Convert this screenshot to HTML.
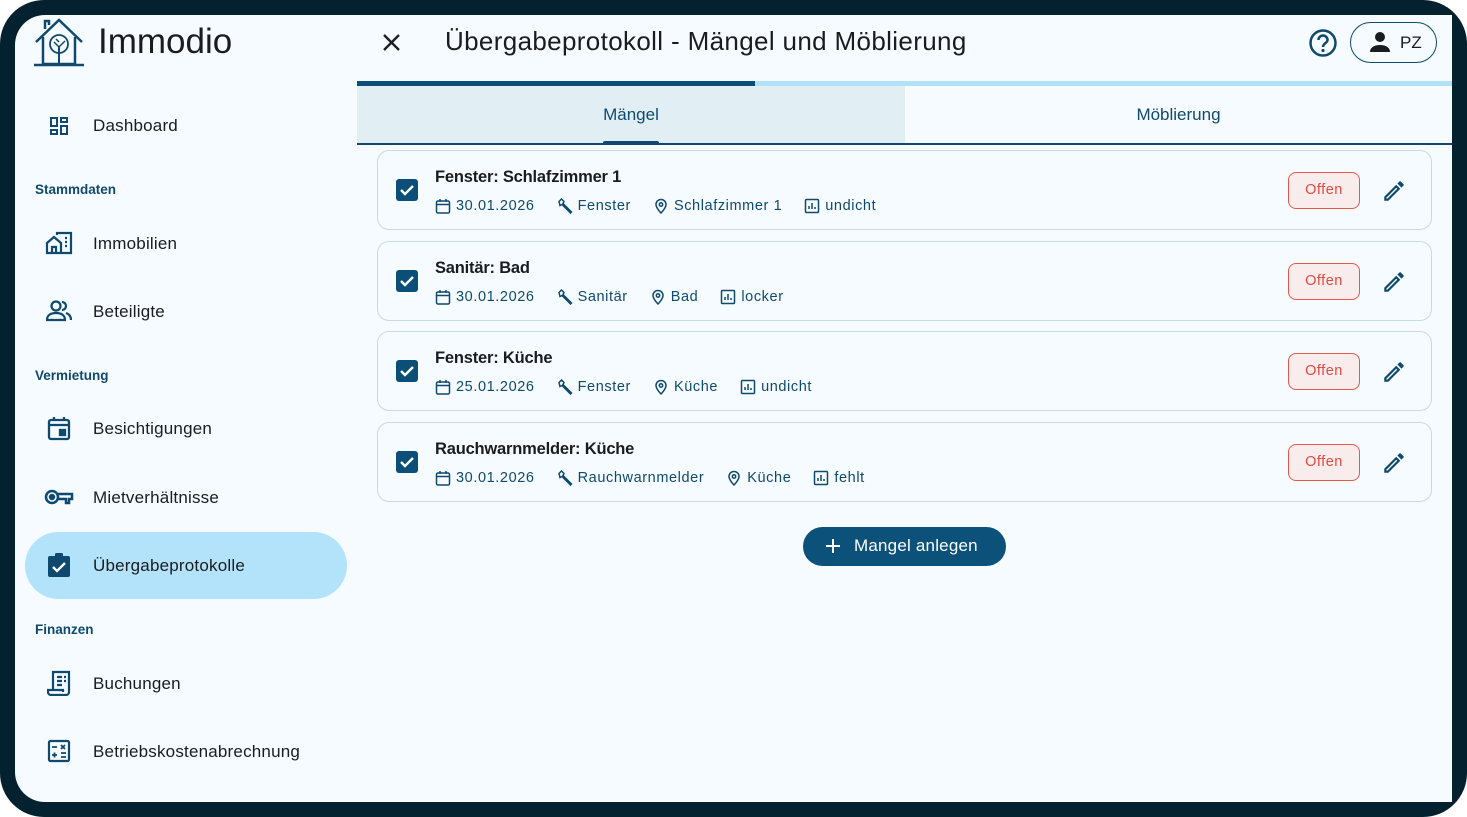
<!DOCTYPE html>
<html><head><meta charset="utf-8"><style>
*{box-sizing:border-box;margin:0;padding:0}
body{width:1467px;height:817px;background:#ffffff;font-family:"Liberation Sans",sans-serif;overflow:hidden;position:relative}
.frame{position:absolute;left:0;top:0;width:1467px;height:817px;background:#03212f;border-radius:44px}
.screen{position:absolute;left:15px;top:15px;width:1437px;height:787px;background:#f5fbfe;border-radius:30px 0 0 30px;overflow:hidden}
.abs{position:absolute}
.nav{position:absolute;left:93px;font-size:17px;color:#1a1c1e;letter-spacing:.2px}
.sec{position:absolute;left:35px;font-size:13.5px;font-weight:bold;color:#0f4a6e}
.ic{position:absolute;left:47px}
.card{position:absolute;left:377px;width:1055px;height:80px;border:1.5px solid #c8dae4;border-radius:12px;background:#f5fbfe}
.cb{position:absolute;left:18px;top:28px;width:22px;height:22px;background:#0b4f78;border-radius:3px}
.t{position:absolute;left:57px;top:17px;font-size:16.5px;font-weight:bold;color:#1a1c1e;letter-spacing:-.2px}
.m{position:absolute;left:57px;top:47px;font-size:14.5px;color:#0f4a6e;display:flex;align-items:center;letter-spacing:.6px}
.m svg{margin-right:5px}
.m span{margin-right:22px}
.chip{position:absolute;left:910px;top:21px;width:72px;height:37px;border:1.5px solid #e5584d;border-radius:8px;background:#f9ecec;color:#e04a3f;font-size:14.5px;text-align:center;line-height:34px;letter-spacing:.5px}
.pen{position:absolute;left:1003px;top:27px}
</style></head><body>
<div class="frame"></div>
<div class="screen"></div>
<!-- logo -->
<svg class="abs" style="left:33px;top:17px" width="52" height="50" viewBox="0 0 52 50" fill="none" stroke="#0f4a6e" stroke-width="2.5">
<path d="M3 25 L26 3 L49 25"/><path d="M10 20 V47 H42 V20"/><path d="M12 12 V4 H16 V8"/><path d="M1 48 H51"/>
<circle cx="26" cy="27" r="9" stroke-width="1.8"/><path d="M26 30 V47" stroke-width="2"/><path d="M21 25 l5 5 l6-6 M23 22 l3 3" stroke-width="1.5"/>
</svg>
<div class="abs" style="left:98px;top:22px;font-size:35px;color:#1a1c1e">Immodio</div>
<!-- sidebar -->
<svg class="ic" style="top:114px" width="24" height="24" viewBox="0 0 24 24" fill="#0f4a6e"><path d="M3 13h8V3H3v10zm2-8h4v6H5V5zm8 16h8V11h-8v10zm2-8h4v6h-4v-6zM13 3v6h8V3h-8zm6 4h-4V5h4v2zM3 21h8v-6H3v6zm2-4h4v2H5v-2z"/></svg>
<div class="nav" style="top:116px">Dashboard</div>
<div class="sec" style="top:182px">Stammdaten</div>
<svg class="ic" style="top:231px;left:45px" width="28" height="24" viewBox="0 0 28 24" fill="none" stroke="#0f4a6e" stroke-width="2.2"><path d="M2 12 L9 6 L16 12 V22 H2Z M7 22 V16 H11 V22 M12 4 V2 H26 V22 H16"/><path d="M20 7h2M20 11h2M20 15h2" /></svg>
<div class="nav" style="top:234px">Immobilien</div>
<svg class="ic" style="top:300px;left:46px" width="26" height="22" viewBox="0 0 26 22" fill="#0f4a6e"><circle cx="10" cy="6" r="4.5" fill="none" stroke="#0f4a6e" stroke-width="2.2"/><path d="M1 20c0-5 4-7 9-7s9 2 9 7z" fill="none" stroke="#0f4a6e" stroke-width="2.2"/><path d="M16 2a4 4 0 010 8M20 13c3 1 5 3 5 7" fill="none" stroke="#0f4a6e" stroke-width="2.2"/></svg>
<div class="nav" style="top:302px">Beteiligte</div>
<div class="sec" style="top:368px">Vermietung</div>
<svg class="ic" style="top:416px" width="24" height="25" viewBox="0 0 24 25" fill="none" stroke="#0f4a6e" stroke-width="2.3"><rect x="2" y="4" width="20" height="19" rx="2"/><path d="M2 9h20M7 1v4M17 1v4"/><rect x="13" y="14" width="5" height="5" fill="#0f4a6e"/></svg>
<div class="nav" style="top:419px">Besichtigungen</div>
<svg class="ic" style="top:488px;left:44px" width="30" height="18" viewBox="0 0 30 18" fill="none" stroke="#0f4a6e" stroke-width="2.5"><circle cx="8" cy="9" r="6"/><circle cx="8" cy="9" r="2" fill="#0f4a6e"/><path d="M14 6h14v5h-3v4h-3v-4h-8"/></svg>
<div class="nav" style="top:488px">Mietverhältnisse</div>
<div class="abs" style="left:25px;top:532px;width:322px;height:67px;border-radius:34px;background:#b3e3fb"></div>
<svg class="ic" style="top:552px" width="24" height="26" viewBox="0 0 24 26"><rect x="1" y="4" width="22" height="21" rx="2" fill="#0f4a6e"/><rect x="8" y="1" width="8" height="5" rx="1.5" fill="#0f4a6e"/><path d="M6 15l4 4 8-8" fill="none" stroke="#fff" stroke-width="2.3"/></svg>
<div class="nav" style="top:556px">Übergabeprotokolle</div>
<div class="sec" style="top:622px">Finanzen</div>
<svg class="ic" style="top:670px" width="24" height="26" viewBox="0 0 24 26" fill="none" stroke="#0f4a6e" stroke-width="2.2"><path d="M6 20V2h16v20a3 3 0 01-3 3H4a3 3 0 01-3-3v-2h15v2"/><path d="M10 7h5M10 11h5M10 15h5M17 7h2M17 11h2"/></svg>
<div class="nav" style="top:674px">Buchungen</div>
<svg class="ic" style="top:739px" width="24" height="24" viewBox="0 0 24 24" fill="none" stroke="#0f4a6e" stroke-width="2.2"><rect x="2" y="2" width="20" height="20" rx="1.5"/><path d="M5 8h5M14 6l4 4M18 6l-4 4M5 16h5M7.5 13.5v5M14 14h5M14 18h5" stroke-width="1.8"/></svg>
<div class="nav" style="top:742px">Betriebskostenabrechnung</div>
<!-- header -->
<svg class="abs" style="left:382px;top:33px" width="19" height="19" viewBox="0 0 19 19" stroke="#1a1c1e" stroke-width="2.3"><path d="M2 2l15 15M17 2L2 17"/></svg>
<div class="abs" style="left:445px;top:26px;font-size:26px;color:#1a1c1e;letter-spacing:.35px">Übergabeprotokoll - Mängel und Möblierung</div>
<svg class="abs" style="left:1308px;top:28px" width="30" height="30" viewBox="0 0 30 30"><circle cx="15" cy="15" r="12.5" fill="none" stroke="#0f4a6e" stroke-width="2.5"/><path d="M10.5 12a4.5 4.5 0 119 0c0 3-4.5 3.5-4.5 7" fill="none" stroke="#0f4a6e" stroke-width="2.5"/><circle cx="15" cy="22.5" r="1.6" fill="#0f4a6e"/></svg>
<div class="abs" style="left:1350px;top:22px;width:87px;height:41px;border:1.5px solid #0f4a6e;border-radius:21px"></div>
<svg class="abs" style="left:1369px;top:31px" width="22" height="22" viewBox="0 0 22 22" fill="#1a1c1e"><circle cx="11" cy="6" r="5"/><path d="M1 21c0-5 5-7 10-7s10 2 10 7z"/></svg>
<div class="abs" style="left:1400px;top:33px;font-size:17px;color:#1a1c1e">PZ</div>
<!-- progress & tabs -->
<div class="abs" style="left:357px;top:81px;width:1095px;height:5px;background:#b3e1f8"></div>
<div class="abs" style="left:357px;top:81px;width:398px;height:5px;background:#0b4f78"></div>
<div class="abs" style="left:357px;top:86px;width:548px;height:57px;background:#e1eef4"></div>
<div class="abs" style="left:357px;top:143px;width:1095px;height:1.5px;background:#0f4a6e"></div>
<div class="abs" style="left:603px;top:141px;width:56px;height:3px;background:#0f4a6e;border-radius:2px 2px 0 0"></div>
<div class="abs" style="left:357px;top:105px;width:548px;text-align:center;font-size:17px;color:#0f4a6e">Mängel</div>
<div class="abs" style="left:905px;top:105px;width:547px;text-align:center;font-size:17px;color:#0f4a6e">Möblierung</div>
<!-- cards -->
<svg width="0" height="0" style="position:absolute"><defs>
<symbol id="cal" viewBox="0 0 16 16"><g fill="none" stroke="#0f4a6e" stroke-width="1.5"><rect x="1.5" y="3" width="13" height="12" rx="1.5"/><path d="M1.5 6.5h13M5 1v3M11 1v3"/></g></symbol>
<symbol id="wr" viewBox="0 0 16 16"><path d="M2 3.5L4.5 1 7 3.5 6 5.5 14.5 14 13.5 15 5 6.5 3 7.5z" fill="none" stroke="#0f4a6e" stroke-width="1.5"/></symbol>
<symbol id="pin" viewBox="0 0 16 16"><g fill="none" stroke="#0f4a6e" stroke-width="1.5"><path d="M8 15s-5-5-5-8.5a5 5 0 0110 0C13 10 8 15 8 15z"/><circle cx="8" cy="6.5" r="1.7"/></g></symbol>
<symbol id="bar" viewBox="0 0 16 16"><g fill="none" stroke="#0f4a6e" stroke-width="1.5"><rect x="1.5" y="1.5" width="13" height="13" rx="1"/><path d="M5 11V8M8 11V5M11 11V9"/></g></symbol>
<symbol id="chk" viewBox="0 0 22 22"><path d="M5 11l4 4 8-8" fill="none" stroke="#fff" stroke-width="2.4"/></symbol>
<symbol id="pen" viewBox="0 0 24 24"><path d="M3 17.25V21h3.75L17.81 9.94l-3.75-3.75L3 17.25zM5.92 19H5v-.92l9.06-9.06.92.92L5.92 19zM20.71 5.63l-2.34-2.34a1 1 0 00-1.41 0l-1.83 1.83 3.75 3.75 1.830-1.83a1 1 0 000-1.41z" fill="#0f4a6e"/></symbol>
</defs></svg>

<div class="card" style="top:150px"><div class="cb"><svg width="22" height="22"><use href="#chk"/></svg></div>
<div class="t">Fenster: Schlafzimmer 1</div>
<div class="m"><svg width="16" height="16"><use href="#cal"/></svg><span>30.01.2026</span><svg width="16" height="16"><use href="#wr"/></svg><span>Fenster</span><svg width="16" height="16"><use href="#pin"/></svg><span>Schlafzimmer 1</span><svg width="16" height="16"><use href="#bar"/></svg><span>undicht</span></div>
<div class="chip">Offen</div><svg class="pen" width="26" height="26"><use href="#pen"/></svg></div>

<div class="card" style="top:241px"><div class="cb"><svg width="22" height="22"><use href="#chk"/></svg></div>
<div class="t">Sanitär: Bad</div>
<div class="m"><svg width="16" height="16"><use href="#cal"/></svg><span>30.01.2026</span><svg width="16" height="16"><use href="#wr"/></svg><span>Sanitär</span><svg width="16" height="16"><use href="#pin"/></svg><span>Bad</span><svg width="16" height="16"><use href="#bar"/></svg><span>locker</span></div>
<div class="chip">Offen</div><svg class="pen" width="26" height="26"><use href="#pen"/></svg></div>

<div class="card" style="top:331px"><div class="cb"><svg width="22" height="22"><use href="#chk"/></svg></div>
<div class="t">Fenster: Küche</div>
<div class="m"><svg width="16" height="16"><use href="#cal"/></svg><span>25.01.2026</span><svg width="16" height="16"><use href="#wr"/></svg><span>Fenster</span><svg width="16" height="16"><use href="#pin"/></svg><span>Küche</span><svg width="16" height="16"><use href="#bar"/></svg><span>undicht</span></div>
<div class="chip">Offen</div><svg class="pen" width="26" height="26"><use href="#pen"/></svg></div>

<div class="card" style="top:422px"><div class="cb"><svg width="22" height="22"><use href="#chk"/></svg></div>
<div class="t">Rauchwarnmelder: Küche</div>
<div class="m"><svg width="16" height="16"><use href="#cal"/></svg><span>30.01.2026</span><svg width="16" height="16"><use href="#wr"/></svg><span>Rauchwarnmelder</span><svg width="16" height="16"><use href="#pin"/></svg><span>Küche</span><svg width="16" height="16"><use href="#bar"/></svg><span>fehlt</span></div>
<div class="chip">Offen</div><svg class="pen" width="26" height="26"><use href="#pen"/></svg></div>

<div class="abs" style="left:803px;top:527px;width:203px;height:39px;border-radius:20px;background:#0b5179"></div>
<svg class="abs" style="left:825px;top:538px" width="16" height="16" stroke="#fff" stroke-width="2"><path d="M8 1v14M1 8h14"/></svg>
<div class="abs" style="left:854px;top:536px;font-size:17px;color:#fff;letter-spacing:.2px">Mangel anlegen</div>
</body></html>
